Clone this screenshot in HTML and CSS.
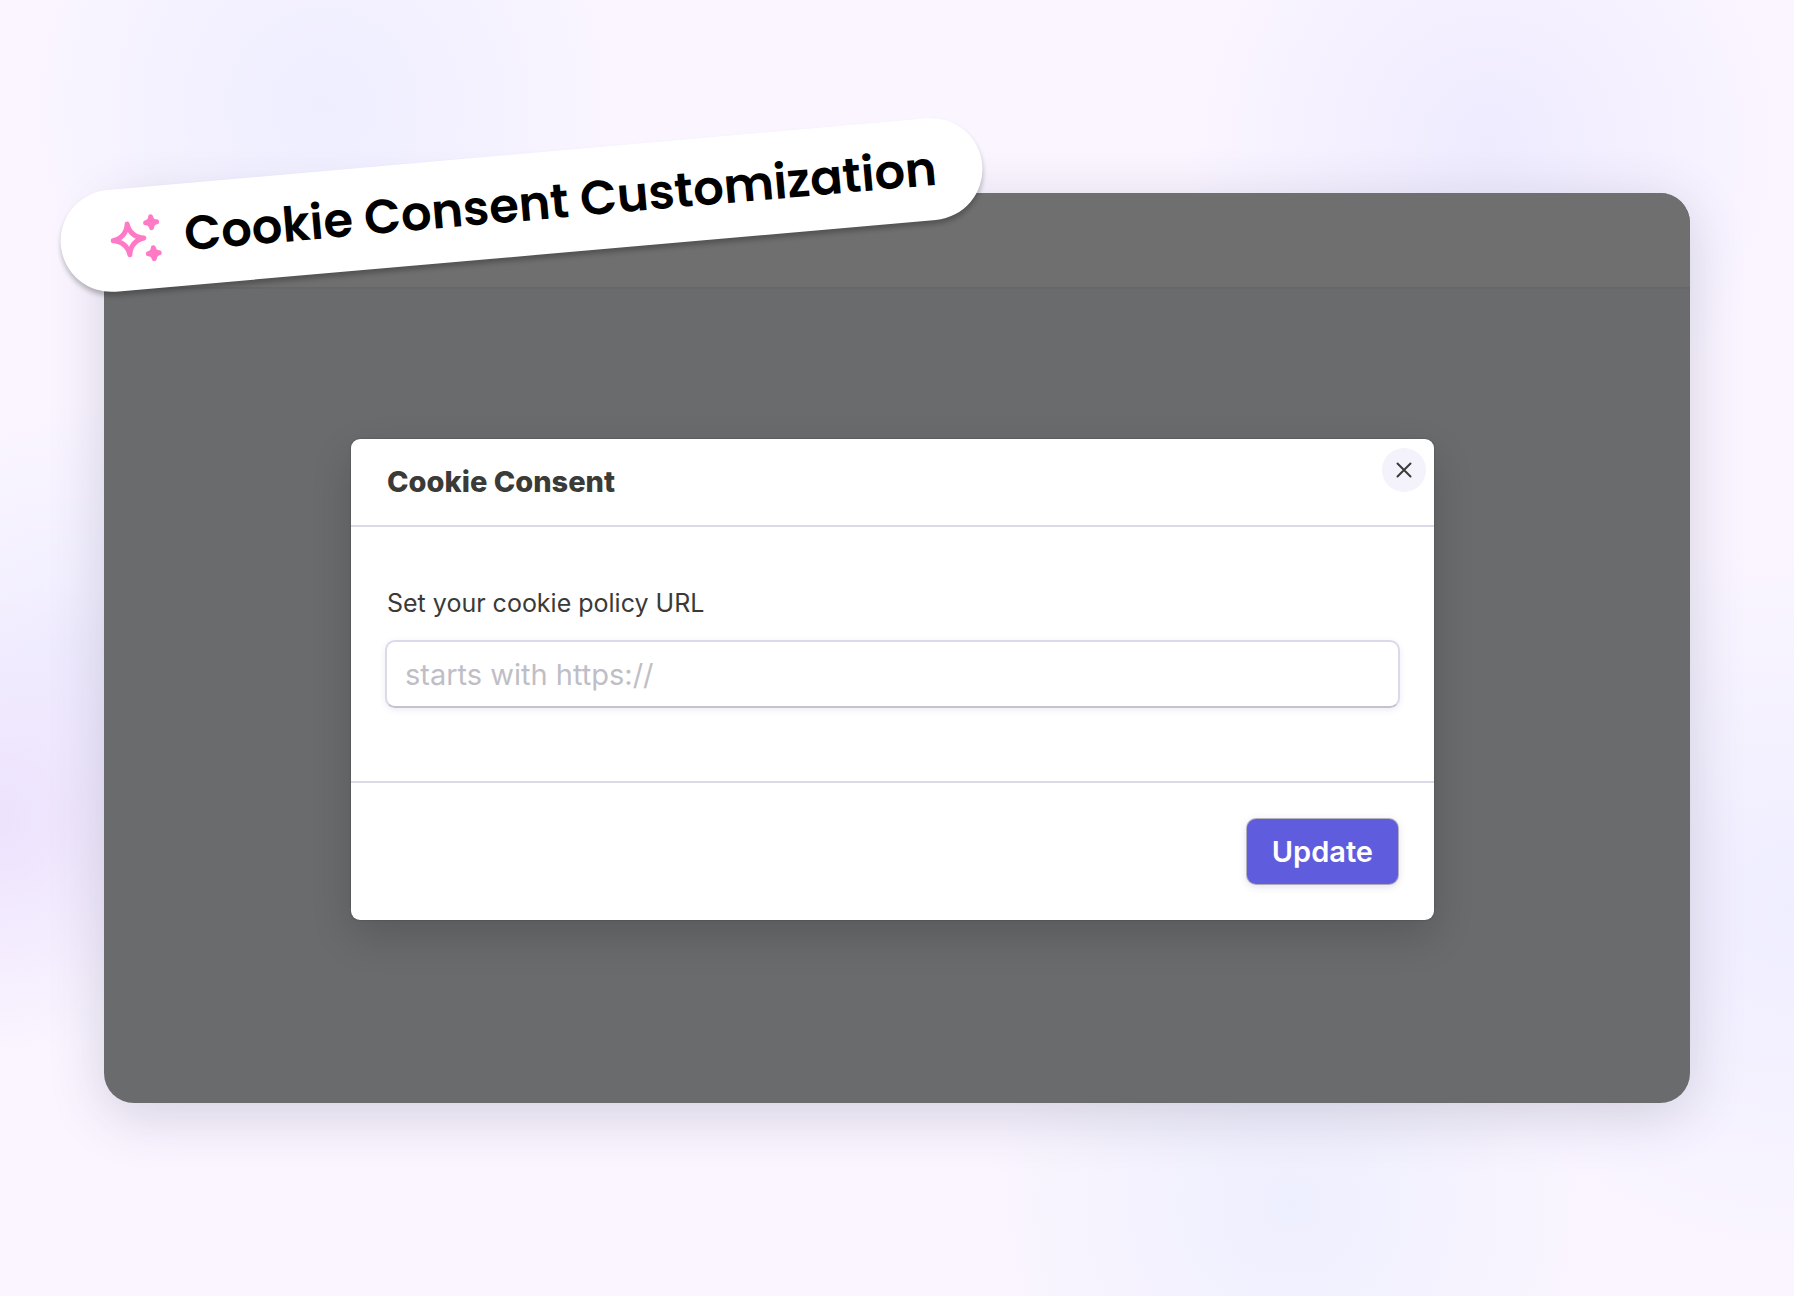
FILE: index.html
```html
<!DOCTYPE html>
<html lang="en">
<head>
    <meta charset="UTF-8">
    <meta name="viewport" content="width=device-width, initial-scale=1.0">
    <title>Cookie Consent Customization</title>
    <link rel="stylesheet" href="styles.css">
</head>
<body>

<div class="window">
    <div class="window-header"></div>

    <div class="window-content">
        <!-- Cookie consent dialog -->
        <form class="modal" role="dialog" aria-labelledby="modal-title">
            <div class="modal-header">
                <h2 id="modal-title">Cookie Consent</h2>
                <button type="button" class="close-button" aria-label="Close">
                    <svg viewBox="0 0 16 16" width="16" height="16" fill="none" stroke="currentColor" stroke-width="2" stroke-linecap="round">
                        <path d="M1.5 1.5 14.5 14.5M14.5 1.5 1.5 14.5"/>
                    </svg>
                </button>
            </div>
            <div class="modal-body">
                <label for="policy-url">Set your cookie policy URL</label>
                <input type="url" id="policy-url" placeholder="starts with https://">
            </div>
            <div class="modal-footer">
                <button type="submit" class="update-button">Update</button>
            </div>
        </form>
    </div>

    <!-- Tilted title badge -->
    <div class="badge">
        <svg class="sparkles" viewBox="0 0 52 52" width="52" height="52">
            <path class="star-outline" d="M18 10.5C19 19 25 25 33.5 26C25 27 19 33 18 41.5C17 33 11 27 2.5 26C11 25 17 19 18 10.5Z"/>
            <path class="star-small" d="M42 5.5Q42.5 10.5 47.5 11Q42.5 11.5 42 16.5Q41.5 11.5 36.5 11Q41.5 10.5 42 5.5Z"/>
            <path class="star-small" d="M42 36.5Q42.5 41.5 47.5 42Q42.5 42.5 42 47.5Q41.5 42.5 36.5 42Q41.5 41.5 42 36.5Z"/>
        </svg>
        <h1>Cookie Consent Customization</h1>
    </div>
</div>

</body>
</html>
```
FILE: styles.css
```css
* {
    margin: 0;
    padding: 0;
    box-sizing: border-box;
}

body {
    font-family: 'Inter', 'Liberation Sans', sans-serif;
    min-height: 100vh;
    display: flex;
    padding: 193px 104px;
    color: #3a3a37;
    background:
        radial-gradient(circle at 18% 8%, #eeeeff 0, rgba(238, 238, 255, 0) 300px),
        radial-gradient(circle at 83% 11%, #eeebff 0, rgba(238, 235, 255, 0) 300px),
        radial-gradient(circle at 0% 63%, #ece2fd 0, rgba(236, 226, 253, 0) 240px),
        radial-gradient(circle at 4% 50%, #f0eeff 0, rgba(240, 238, 255, 0) 240px),
        radial-gradient(circle at 100% 70%, #efeeff 0, rgba(239, 238, 255, 0) 360px),
        radial-gradient(circle at 72% 93%, #eeeffe 0, rgba(238, 239, 254, 0) 300px),
        #faf5ff;
}

.window {
    position: relative;
    flex: 1;
    display: flex;
    flex-direction: column;
    background: #6a6b6d;
    border-radius: 30px;
    box-shadow: 0 12px 56px rgba(60, 60, 90, 0.2);
}

.window-header {
    height: 96px;
    background: #6f6f6f;
    border-bottom: 2px solid #666769;
    border-radius: 30px 30px 0 0;
}

.window-content {
    padding: 150px 256px 150px 247px;
}

.modal {
    background: #fff;
    border-radius: 9px;
    box-shadow: 0 16px 40px rgba(0, 0, 0, 0.16), 0 0 2px rgba(0, 0, 0, 0.3);
}

.modal-header {
    position: relative;
    padding: 26px 36px;
    border-bottom: 2px solid #dcdae8;
}

.modal-header h2 {
    font-size: 29px;
    line-height: 34px;
    font-weight: 800;
}

.close-button {
    position: absolute;
    top: 9px;
    right: 8px;
    width: 44px;
    height: 44px;
    display: flex;
    align-items: center;
    justify-content: center;
    border: none;
    border-radius: 50%;
    background: #f4f2fb;
    color: #3a3a37;
    cursor: pointer;
}

.modal-body {
    padding: 60px 34px 73px;
    border-bottom: 2px solid #dcdae8;
}

.modal-body label {
    display: block;
    font-size: 25px;
    line-height: 32px;
    margin: 0 2px 21px;
}

.modal-body input {
    display: block;
    width: 100%;
    height: 68px;
    padding: 0 18px;
    font-family: inherit;
    font-size: 29px;
    color: #3a3a37;
    border: 2px solid #dcd9ea;
    border-bottom-color: #c4c2d0;
    border-radius: 10px;
    box-shadow: 0 2px 6px rgba(80, 60, 140, 0.1);
}

.modal-body input::placeholder {
    color: #bfbec6;
    opacity: 1;
}

.modal-footer {
    display: flex;
    justify-content: flex-end;
    padding: 36px;
}

.update-button {
    height: 65px;
    padding: 0 25px;
    font-family: inherit;
    font-size: 29px;
    font-weight: 600;
    color: #fff;
    background: #5f5ddd;
    border: none;
    border-radius: 9px;
    box-shadow: 0 0 0 1px rgba(70, 60, 90, 0.35), 0 2px 8px rgba(80, 60, 140, 0.2);
    cursor: pointer;
}

.badge {
    position: absolute;
    top: -39px;
    left: -45px;
    height: 102px;
    padding: 0 46px 0 50px;
    display: flex;
    align-items: center;
    gap: 22px;
    background: #fff;
    border-radius: 51px;
    box-shadow: 0 4px 5px rgba(0, 0, 0, 0.25);
    color: #000;
    transform: rotate(-5deg);
}

.badge h1 {
    font-family: 'Poppins', 'Inter', sans-serif;
    font-size: 48px;
    font-weight: 600;
    white-space: nowrap;
}

.sparkles {
    fill: none;
    stroke: #ff7ac6;
    stroke-linejoin: round;
}

.star-outline {
    stroke-width: 5;
}

.star-small {
    fill: #ff7ac6;
    stroke-width: 5;
}
```
